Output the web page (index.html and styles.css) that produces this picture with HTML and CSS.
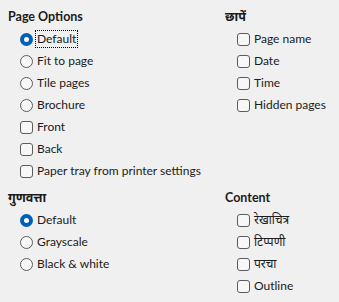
FILE: index.html
```html
<!DOCTYPE html>
<html lang="en">
<head>
<meta charset="utf-8">
<link rel="stylesheet" href="styles.css">
</head>
<body>
<div class="dialog">
  <section class="group">
    <h3 class="heading">Page Options</h3>
    <div class="row"><span class="radio on"></span><span class="label focus">Default</span></div>
    <div class="row"><span class="radio"></span><span class="label">Fit to page</span></div>
    <div class="row"><span class="radio"></span><span class="label">Tile pages</span></div>
    <div class="row"><span class="radio"></span><span class="label">Brochure</span></div>
    <div class="row"><span class="check"></span><span class="label">Front</span></div>
    <div class="row"><span class="check"></span><span class="label">Back</span></div>
    <div class="row"><span class="check"></span><span class="label">Paper tray from printer settings</span></div>
  </section>
  <section class="group">
    <h3 class="heading">छापें</h3>
    <div class="row"><span class="check"></span><span class="label">Page name</span></div>
    <div class="row"><span class="check"></span><span class="label">Date</span></div>
    <div class="row"><span class="check"></span><span class="label">Time</span></div>
    <div class="row"><span class="check"></span><span class="label">Hidden pages</span></div>
  </section>
  <section class="group lower">
    <h3 class="heading">गुणवत्ता</h3>
    <div class="row"><span class="radio on"></span><span class="label">Default</span></div>
    <div class="row"><span class="radio"></span><span class="label">Grayscale</span></div>
    <div class="row"><span class="radio"></span><span class="label">Black &amp; white</span></div>
  </section>
  <section class="group lower">
    <h3 class="heading">Content</h3>
    <div class="row"><span class="check"></span><span class="label">रेखाचित्र</span></div>
    <div class="row"><span class="check"></span><span class="label">टिप्पणी</span></div>
    <div class="row"><span class="check"></span><span class="label">परचा</span></div>
    <div class="row"><span class="check"></span><span class="label">Outline</span></div>
  </section>
</div>
</body>
</html>
```
FILE: styles.css
```css
html, body {
  margin: 0;
  padding: 0;
  background: #f0f0f0;
}
body {
  font-family: Lato, "Noto Sans", sans-serif;
  font-size: 12px;
  color: #1b1b1b;
  width: 339px;
  height: 302px;
  overflow: hidden;
}
.dialog {
  display: grid;
  grid-template-columns: 217px 1fr;
  padding: 6px 0 0 8px;
  row-gap: 5px;
}
.group {
  display: flex;
  flex-direction: column;
}
.heading {
  margin: 0;
  height: 22px;
  line-height: 22px;
  font-size: 12.5px;
  font-weight: bold;
}
.row {
  height: 22px;
  display: flex;
  align-items: center;
  padding-left: 12px;
  gap: 2px;
}
.label {
  line-height: 16px;
  padding: 0 1px;
  border: 1px solid transparent;
}
.label.focus {
  border: 1px dotted #000;
}
.radio {
  box-sizing: border-box;
  width: 13px;
  height: 13px;
  border-radius: 50%;
  border: 1px solid #5c5c5c;
  background: #f7f7f7;
  flex: none;
}
.radio.on {
  border: 4px solid #005fb8;
  background: #fff;
}
.check {
  box-sizing: border-box;
  width: 13px;
  height: 13px;
  border-radius: 3px;
  border: 1px solid #5c5c5c;
  background: #f7f7f7;
  flex: none;
}
```
